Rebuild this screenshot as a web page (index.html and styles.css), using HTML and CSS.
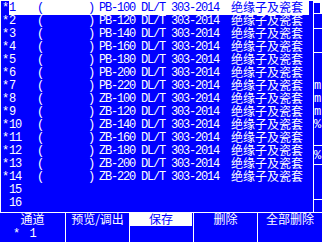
FILE: index.html
```html
<!DOCTYPE html>
<html>
<head>
    <meta charset="utf-8">
    <link rel="stylesheet" href="styles.css">
</head>
<body>
<div class="screen">
    <div class="main">
        <div class="list">
            <div class="row selected"><span class="mark">*</span><span class="body"><span class="num">1</span><span class="open">(</span><span class="close">)</span><span class="code">PB-100 DL/T 303-2014</span><span class="name">绝缘子及瓷套</span></span></div>
            <div class="row"><span class="mark">*</span><span class="body"><span class="num">2</span><span class="open">(</span><span class="close">)</span><span class="code">PB-120 DL/T 303-2014</span><span class="name">绝缘子及瓷套</span></span></div>
            <div class="row"><span class="mark">*</span><span class="body"><span class="num">3</span><span class="open">(</span><span class="close">)</span><span class="code">PB-140 DL/T 303-2014</span><span class="name">绝缘子及瓷套</span></span></div>
            <div class="row"><span class="mark">*</span><span class="body"><span class="num">4</span><span class="open">(</span><span class="close">)</span><span class="code">PB-160 DL/T 303-2014</span><span class="name">绝缘子及瓷套</span></span></div>
            <div class="row"><span class="mark">*</span><span class="body"><span class="num">5</span><span class="open">(</span><span class="close">)</span><span class="code">PB-180 DL/T 303-2014</span><span class="name">绝缘子及瓷套</span></span></div>
            <div class="row"><span class="mark">*</span><span class="body"><span class="num">6</span><span class="open">(</span><span class="close">)</span><span class="code">PB-200 DL/T 303-2014</span><span class="name">绝缘子及瓷套</span></span></div>
            <div class="row"><span class="mark">*</span><span class="body"><span class="num">7</span><span class="open">(</span><span class="close">)</span><span class="code">PB-220 DL/T 303-2014</span><span class="name">绝缘子及瓷套</span></span></div>
            <div class="row"><span class="mark">*</span><span class="body"><span class="num">8</span><span class="open">(</span><span class="close">)</span><span class="code">ZB-100 DL/T 303-2014</span><span class="name">绝缘子及瓷套</span></span></div>
            <div class="row"><span class="mark">*</span><span class="body"><span class="num">9</span><span class="open">(</span><span class="close">)</span><span class="code">ZB-120 DL/T 303-2014</span><span class="name">绝缘子及瓷套</span></span></div>
            <div class="row"><span class="mark">*</span><span class="body"><span class="num">10</span><span class="open">(</span><span class="close">)</span><span class="code">ZB-140 DL/T 303-2014</span><span class="name">绝缘子及瓷套</span></span></div>
            <div class="row"><span class="mark">*</span><span class="body"><span class="num">11</span><span class="open">(</span><span class="close">)</span><span class="code">ZB-160 DL/T 303-2014</span><span class="name">绝缘子及瓷套</span></span></div>
            <div class="row"><span class="mark">*</span><span class="body"><span class="num">12</span><span class="open">(</span><span class="close">)</span><span class="code">ZB-180 DL/T 303-2014</span><span class="name">绝缘子及瓷套</span></span></div>
            <div class="row"><span class="mark">*</span><span class="body"><span class="num">13</span><span class="open">(</span><span class="close">)</span><span class="code">ZB-200 DL/T 303-2014</span><span class="name">绝缘子及瓷套</span></span></div>
            <div class="row"><span class="mark">*</span><span class="body"><span class="num">14</span><span class="open">(</span><span class="close">)</span><span class="code">ZB-220 DL/T 303-2014</span><span class="name">绝缘子及瓷套</span></span></div>
            <div class="row"><span class="mark"></span><span class="body"><span class="num">15</span></span></div>
            <div class="row"><span class="mark"></span><span class="body"><span class="num">16</span></span></div>
        </div>
        <div class="side">
            <div class="scroll"><div class="thumb"></div></div>
            <div class="cell c1"></div>
            <div class="cell c2"></div>
            <div class="cell c3"><span class="unit">m</span><span class="unit">m</span><span class="unit">m</span><span class="unit">%</span></div>
            <div class="cell c4"><span class="unit">%</span></div>
            <div class="cell c5"></div>
            <div class="cell c6"></div>
        </div>
    </div>
    <div class="menu">
        <div class="key">
            <div class="label">通道</div>
            <div class="value">* 1</div>
        </div>
        <div class="key"><div class="label">预览/调出</div></div>
        <div class="key"><div class="label active">保存</div></div>
        <div class="key"><div class="label">删除</div></div>
        <div class="key"><div class="label">全部删除</div></div>
    </div>
</div>
</body>
</html>
```

FILE: styles.css
```css
* {
    box-sizing: border-box;
}

body {
    margin: 0;
    background-color: #0000ff;
}

.screen {
    width: 322px;
    height: 242px;
    background-color: #0000ff;
    color: #ffffff;
    font-family: "Liberation Mono", "Noto Sans CJK SC", monospace;
    font-size: 12px;
    overflow: hidden;
}

.main {
    display: flex;
    height: 213px;
    border-top: 1px solid #ffffff;
    border-left: 1px solid #ffffff;
    border-bottom: 1px solid #ffffff;
}

.list {
    width: 312px;
}

.row {
    display: flex;
    height: 13px;
    line-height: 15px;
    white-space: pre;
}

.row.selected {
    height: 14px;
    margin-bottom: -1px;
}

.mark {
    width: 8px;
    padding-left: 1px;
    letter-spacing: -1.2px;
}

.body {
    display: flex;
    width: 300px;
    letter-spacing: -1.2px;
}

.selected .body {
    background-color: #ffffff;
    color: #0000ff;
}

.num {
    width: 26px;
}

.open {
    width: 52px;
    padding-left: 2px;
}

.close {
    width: 12px;
    padding-left: 1px;
}

.code {
    width: 132px;
}

.name {
    font-family: "Noto Sans CJK SC", sans-serif;
    line-height: 11px;
    letter-spacing: 0;
}

.side {
    width: 9px;
    border-left: 1px solid #ffffff;
    overflow: hidden;
}

.scroll {
    height: 16px;
}

.thumb {
    height: 14px;
    margin-top: -1px;
    border-top: 3px solid #ffffff;
    border-right: 2px solid #ffffff;
    border-bottom: 1px solid #ffffff;
}

.cell {
    border-bottom: 1px solid #ffffff;
}

.c1 { height: 13px; }
.c2 { height: 24px; }
.c3 { height: 93px; padding-top: 27px; }
.c4 { height: 19px; padding-top: 4px; }
.c5 { height: 35px; }
.c6 { height: 12px; border-bottom: none; }

.unit {
    display: block;
    height: 13px;
    line-height: 12px;
    letter-spacing: -1.2px;
}

.menu {
    display: flex;
    height: 29px;
}

.key {
    width: 64px;
    border-left: 1px solid #ffffff;
}

.key:first-child {
    width: 65px;
    border-left: none;
}

.key:last-child {
    width: 65px;
}

.label {
    height: 13px;
    line-height: 12px;
    text-align: center;
    font-family: "Noto Sans CJK SC", sans-serif;
}

.label.active {
    width: 62px;
    background-color: #ffffff;
    color: #0000ff;
}

.value {
    height: 16px;
    line-height: 16px;
    padding-left: 13px;
    letter-spacing: 1px;
}
```
